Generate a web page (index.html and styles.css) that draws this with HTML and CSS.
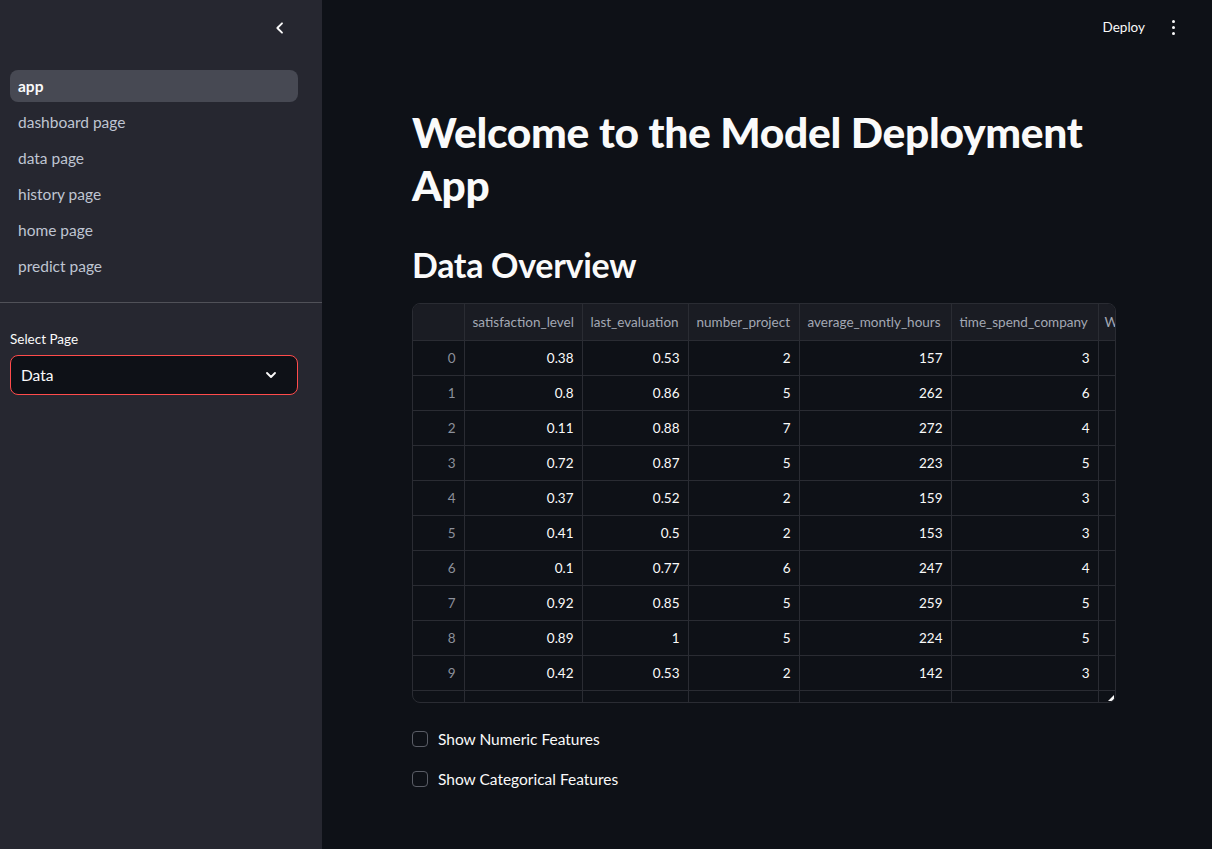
FILE: index.html
```html
<!DOCTYPE html>
<html>
<head>
<meta charset="utf-8">
<link rel="stylesheet" href="styles.css">
</head>
<body>
<div class="app">
  <aside class="sidebar">
    <div class="side-top">
      <button class="collapse" aria-label="collapse">
        <svg width="16" height="16" viewBox="0 0 24 24"><path d="M15 5l-7 7 7 7" fill="none" stroke="#fafafa" stroke-width="2.8" stroke-linecap="round" stroke-linejoin="round"/></svg>
      </button>
    </div>
    <nav class="nav">
      <a class="nav-item active">app</a>
      <a class="nav-item">dashboard page</a>
      <a class="nav-item">data page</a>
      <a class="nav-item">history page</a>
      <a class="nav-item">home page</a>
      <a class="nav-item">predict page</a>
    </nav>
    <div class="divider"></div>
    <div class="side-body">
      <label class="field-label">Select Page</label>
      <div class="select">
        <span>Data</span>
        <svg width="16" height="16" viewBox="0 0 24 24"><path d="M6 9l6 6 6-6" fill="none" stroke="#fafafa" stroke-width="2.8" stroke-linecap="round" stroke-linejoin="round"/></svg>
      </div>
    </div>
  </aside>
  <main class="main">
    <header class="topbar">
      <span class="deploy">Deploy</span>
      <span class="kebab"><i></i><i></i><i></i></span>
    </header>
    <section class="content">
      <h1 class="title">Welcome to the Model Deployment App</h1>
      <h2 class="subtitle">Data Overview</h2>
      <div class="table-wrap">
        <table class="grid">
          <colgroup>
            <col class="c-idx"><col class="c1"><col class="c2"><col class="c3"><col class="c4"><col class="c5"><col class="c6">
          </colgroup>
          <thead>
            <tr><th></th><th>satisfaction_level</th><th>last_evaluation</th><th>number_project</th><th>average_montly_hours</th><th>time_spend_company</th><th class="clip">W</th></tr>
          </thead>
          <tbody>
            <tr><td class="idx">0</td><td>0.38</td><td>0.53</td><td>2</td><td>157</td><td>3</td><td></td></tr>
            <tr><td class="idx">1</td><td>0.8</td><td>0.86</td><td>5</td><td>262</td><td>6</td><td></td></tr>
            <tr><td class="idx">2</td><td>0.11</td><td>0.88</td><td>7</td><td>272</td><td>4</td><td></td></tr>
            <tr><td class="idx">3</td><td>0.72</td><td>0.87</td><td>5</td><td>223</td><td>5</td><td></td></tr>
            <tr><td class="idx">4</td><td>0.37</td><td>0.52</td><td>2</td><td>159</td><td>3</td><td></td></tr>
            <tr><td class="idx">5</td><td>0.41</td><td>0.5</td><td>2</td><td>153</td><td>3</td><td></td></tr>
            <tr><td class="idx">6</td><td>0.1</td><td>0.77</td><td>6</td><td>247</td><td>4</td><td></td></tr>
            <tr><td class="idx">7</td><td>0.92</td><td>0.85</td><td>5</td><td>259</td><td>5</td><td></td></tr>
            <tr><td class="idx">8</td><td>0.89</td><td>1</td><td>5</td><td>224</td><td>5</td><td></td></tr>
            <tr><td class="idx">9</td><td>0.42</td><td>0.53</td><td>2</td><td>142</td><td>3</td><td></td></tr>
            <tr class="partial"><td></td><td></td><td></td><td></td><td></td><td></td><td></td></tr>
          </tbody>
        </table>
        <span class="resize"></span>
      </div>
      <div class="checks">
        <label class="check"><span class="box"></span>Show Numeric Features</label>
        <label class="check"><span class="box"></span>Show Categorical Features</label>
      </div>
    </section>
  </main>
</div>
</body>
</html>
```

FILE: styles.css
```css
* { box-sizing: border-box; }
html, body { margin: 0; padding: 0; }
body {
  background: #0e1117;
  color: #fafafa;
  font-family: "Lato", "Noto Sans", sans-serif;
  width: 1212px;
  height: 849px;
  overflow: hidden;
}
.app { display: flex; height: 849px; }

.sidebar {
  width: 322px;
  flex: none;
  background: #262730;
  display: flex;
  flex-direction: column;
}
.side-top {
  height: 70px;
  display: flex;
  justify-content: flex-end;
  align-items: flex-start;
  padding: 20px 34px 0 0;
}
.collapse {
  background: none;
  border: 0;
  padding: 0;
  width: 16px;
  height: 16px;
  display: flex;
}
.nav {
  display: flex;
  flex-direction: column;
  gap: 4px;
  padding: 0 24px 0 10px;
}
.nav-item {
  height: 32px;
  display: flex;
  align-items: center;
  padding: 0 8px;
  border-radius: 8px;
  font-size: 15.5px;
  color: #bfc5d2;
}
.nav-item.active {
  background: #474953;
  color: #fafafa;
  font-weight: 700;
}
.divider {
  height: 1px;
  background: rgba(250,250,250,0.2);
  margin-top: 20px;
}
.side-body {
  padding: 27px 24px 0 10px;
  display: flex;
  flex-direction: column;
}
.field-label {
  font-size: 13.5px;
  color: #fafafa;
  height: 18px;
  line-height: 18px;
  margin-bottom: 7px;
}
.select {
  height: 40px;
  border: 1px solid #ff4b4b;
  border-radius: 8px;
  background: #0e1117;
  display: flex;
  align-items: center;
  justify-content: space-between;
  padding: 0 18px 0 10px;
  font-size: 15.5px;
}
.select svg { display: block; }

.main {
  flex: 1;
  display: flex;
  flex-direction: column;
}
.topbar {
  height: 54px;
  display: flex;
  justify-content: flex-end;
  align-items: center;
  padding-right: 37px;
  gap: 27px;
}
.deploy { font-size: 13.5px; color: #fafafa; }
.kebab {
  display: flex;
  flex-direction: column;
  gap: 3px;
  align-items: center;
}
.kebab i {
  display: block;
  width: 3px;
  height: 3px;
  border-radius: 50%;
  background: #fafafa;
}
.content {
  padding-left: 90px;
  width: 794px;
}
.title {
  margin: 51px 0 0;
  font-size: 42.5px;
  font-weight: 900;
  line-height: 53px;
  letter-spacing: -0.3px;
}
.subtitle {
  margin: 32px 0 0;
  font-size: 34px;
  font-weight: 700;
  line-height: 44px;
  letter-spacing: -0.3px;
}
.table-wrap {
  position: relative;
  margin-top: 16px;
  width: 704px;
  height: 400px;
  border: 1px solid #2a2c33;
  border-radius: 8px;
  overflow: hidden;
}
.grid {
  border-collapse: collapse;
  table-layout: fixed;
  width: 703px;
  font-size: 13.5px;
}
.c-idx { width: 51px; }
.c1 { width: 118px; }
.c2 { width: 106px; }
.c3 { width: 111px; }
.c4 { width: 152px; }
.c5 { width: 147px; }
.c6 { width: 18px; }
.grid th, .grid td {
  border: 1px solid #2a2c33;
  padding: 0 8px;
  height: 35px;
  white-space: nowrap;
  overflow: hidden;
}
.grid tr:first-child th { border-top: 0; }
.grid tr > :first-child { border-left: 0; }
.grid tr > :last-child { border-right: 0; }
.grid th {
  background: #1a1c23;
  color: #a3a8b4;
  font-weight: 400;
  text-align: left;
  height: 36px;
}
.grid th.clip { padding: 0 0 0 6px; }
.grid td { text-align: right; color: #fafafa; }
.grid td.idx { color: #8c909b; }
.resize {
  position: absolute;
  right: 1px;
  bottom: 1px;
  width: 0;
  height: 0;
  border-left: 6px solid transparent;
  border-bottom: 6px solid #fafafa;
}
.checks {
  margin-top: 27px;
  display: flex;
  flex-direction: column;
  gap: 22px;
}
.check {
  display: flex;
  align-items: center;
  gap: 10px;
  font-size: 15.5px;
  height: 18px;
}
.box {
  width: 16px;
  height: 16px;
  border: 1px solid #5a5d66;
  border-radius: 4px;
  flex: none;
}
```
